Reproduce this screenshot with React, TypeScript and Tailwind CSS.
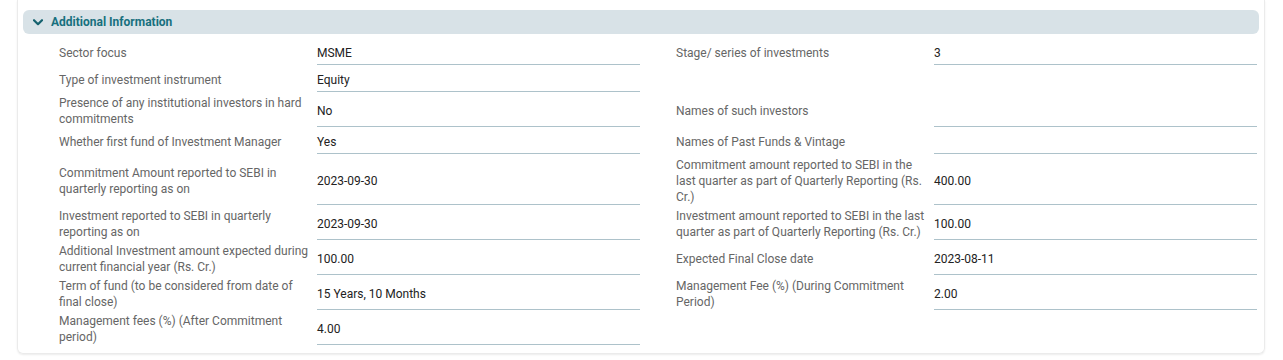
type Item = { label: string; value?: string };

const rows: [Item, Item | null][] = [
  [{ label: "Sector focus", value: "MSME" }, { label: "Stage/ series of investments", value: "3" }],
  [{ label: "Type of investment instrument", value: "Equity" }, null],
  [
    { label: "Presence of any institutional investors in hard commitments", value: "No" },
    { label: "Names of such investors", value: "" },
  ],
  [
    { label: "Whether first fund of Investment Manager", value: "Yes" },
    { label: "Names of Past Funds & Vintage", value: "" },
  ],
  [
    { label: "Commitment Amount reported to SEBI in quarterly reporting as on", value: "2023-09-30" },
    {
      label: "Commitment amount reported to SEBI in the last quarter as part of Quarterly Reporting (Rs. Cr.)",
      value: "400.00",
    },
  ],
  [
    { label: "Investment reported to SEBI in quarterly reporting as on", value: "2023-09-30" },
    {
      label: "Investment amount reported to SEBI in the last quarter as part of Quarterly Reporting (Rs. Cr.)",
      value: "100.00",
    },
  ],
  [
    { label: "Additional Investment amount expected during current financial year (Rs. Cr.)", value: "100.00" },
    { label: "Expected Final Close date", value: "2023-08-11" },
  ],
  [
    { label: "Term of fund (to be considered from date of final close)", value: "15 Years, 10 Months" },
    { label: "Management Fee (%) (During Commitment Period)", value: "2.00" },
  ],
  [{ label: "Management fees (%) (After Commitment period)", value: "4.00" }, null],
];

function Field({ item }: { item: Item | null }) {
  if (!item) return <div className="w-[581px]" />;
  return (
    <div className="flex w-[581px]">
      <div className="flex w-[258px] items-center pr-[8px] pt-[1px] text-[12px] leading-4 text-[#666]">
        {item.label}
      </div>
      <div className="flex min-h-[25px] w-[323px] items-center border-b border-[#adc2ca] pt-[2px] text-[12px] leading-4 text-[#222]">
        {item.value}
      </div>
    </div>
  );
}

export default function App() {
  return (
    <div
      className="min-h-[360px] bg-white pl-[17px] pr-[18px]"
      style={{ fontFamily: "Roboto, 'Liberation Sans', sans-serif" }}
    >
      <div className="rounded-b-md border-x border-b border-[#ebebeb] px-[5px] pt-[10px] pb-[8px] shadow-[0_1px_2px_rgba(0,0,0,0.08)]">
        {/* Section header */}
        <div className="flex h-[24px] items-center gap-[8px] rounded-md bg-[#d8e2e7] pl-[10px]">
          <svg width="10" height="7" viewBox="0 0 10 7" fill="none">
            <polyline
              points="1,1.2 5,5.2 9,1.2"
              stroke="#14616e"
              strokeWidth="2.2"
              strokeLinecap="round"
              strokeLinejoin="round"
            />
          </svg>
          <span className="text-[12px] font-bold text-[#17707e]">Additional Information</span>
        </div>

        {/* Details grid */}
        <div className="mt-[6px] flex flex-col gap-y-[2px] pl-[36px]">
          {rows.map(([left, right], i) => (
            <div key={i} className="flex gap-x-[36px]">
              <Field item={left} />
              <Field item={right} />
            </div>
          ))}
        </div>
      </div>
    </div>
  );
}
